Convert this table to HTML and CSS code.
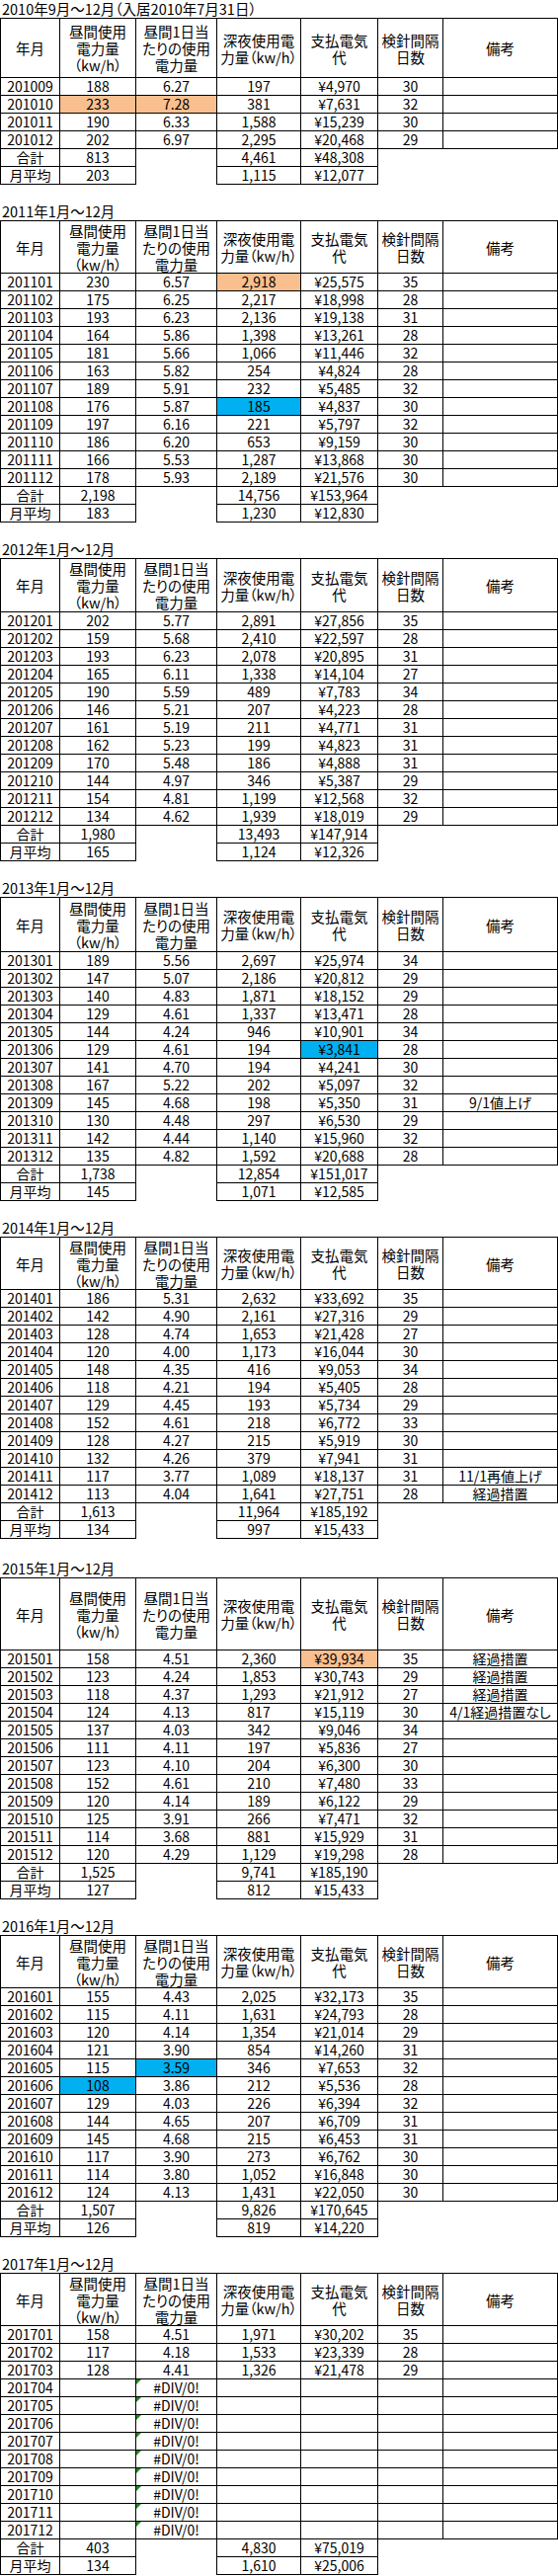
FILE: index.html
```html
<!DOCTYPE html>
<html lang="ja">
<head>
<meta charset="utf-8">
<title>電気使用量</title>
<link rel="stylesheet" href="styles.css">
</head>
<body>
<main class="book">

<section class="sheet">
<div class="title">2010年9月～12月（入居2010年7月31日）</div>
<table class="grid">
<colgroup><col class="c1"><col class="c2"><col class="c3"><col class="c4"><col class="c5"><col class="c6"><col class="c7"></colgroup>
<thead><tr class="hdr h61"><th>年月</th><th>昼間使用<br>電力量<br>（kw/h）</th><th>昼間1日当<br>たりの使用<br>電力量</th><th>深夜使用電<br>力量（kw/h）</th><th>支払電気<br>代</th><th>検針間隔<br>日数</th><th>備考</th></tr></thead>
<tbody>
<tr><td>201009</td><td>188</td><td>6.27</td><td>197</td><td>¥4,970</td><td>30</td><td></td></tr>
<tr><td>201010</td><td class="or">233</td><td class="or">7.28</td><td>381</td><td>¥7,631</td><td>32</td><td></td></tr>
<tr><td>201011</td><td>190</td><td>6.33</td><td>1,588</td><td>¥15,239</td><td>30</td><td></td></tr>
<tr><td>201012</td><td>202</td><td>6.97</td><td>2,295</td><td>¥20,468</td><td>29</td><td></td></tr>
</tbody>
<tbody class="tot">
<tr><td class="b">合計</td><td class="b">813</td><td></td><td class="b">4,461</td><td class="b">¥48,308</td><td></td><td></td></tr>
<tr><td class="b">月平均</td><td class="b">203</td><td></td><td class="b">1,115</td><td class="b">¥12,077</td><td></td><td></td></tr>
</tbody>
</table>
</section>

<section class="sheet">
<div class="title">2011年1月～12月</div>
<table class="grid">
<colgroup><col class="c1"><col class="c2"><col class="c3"><col class="c4"><col class="c5"><col class="c6"><col class="c7"></colgroup>
<thead><tr class="hdr"><th>年月</th><th>昼間使用<br>電力量<br>（kw/h）</th><th>昼間1日当<br>たりの使用<br>電力量</th><th>深夜使用電<br>力量（kw/h）</th><th>支払電気<br>代</th><th>検針間隔<br>日数</th><th>備考</th></tr></thead>
<tbody>
<tr><td>201101</td><td>230</td><td>6.57</td><td class="or">2,918</td><td>¥25,575</td><td>35</td><td></td></tr>
<tr><td>201102</td><td>175</td><td>6.25</td><td>2,217</td><td>¥18,998</td><td>28</td><td></td></tr>
<tr><td>201103</td><td>193</td><td>6.23</td><td>2,136</td><td>¥19,138</td><td>31</td><td></td></tr>
<tr><td>201104</td><td>164</td><td>5.86</td><td>1,398</td><td>¥13,261</td><td>28</td><td></td></tr>
<tr><td>201105</td><td>181</td><td>5.66</td><td>1,066</td><td>¥11,446</td><td>32</td><td></td></tr>
<tr><td>201106</td><td>163</td><td>5.82</td><td>254</td><td>¥4,824</td><td>28</td><td></td></tr>
<tr><td>201107</td><td>189</td><td>5.91</td><td>232</td><td>¥5,485</td><td>32</td><td></td></tr>
<tr><td>201108</td><td>176</td><td>5.87</td><td class="bl">185</td><td>¥4,837</td><td>30</td><td></td></tr>
<tr><td>201109</td><td>197</td><td>6.16</td><td>221</td><td>¥5,797</td><td>32</td><td></td></tr>
<tr><td>201110</td><td>186</td><td>6.20</td><td>653</td><td>¥9,159</td><td>30</td><td></td></tr>
<tr><td>201111</td><td>166</td><td>5.53</td><td>1,287</td><td>¥13,868</td><td>30</td><td></td></tr>
<tr><td>201112</td><td>178</td><td>5.93</td><td>2,189</td><td>¥21,576</td><td>30</td><td></td></tr>
</tbody>
<tbody class="tot">
<tr><td class="b">合計</td><td class="b">2,198</td><td></td><td class="b">14,756</td><td class="b">¥153,964</td><td></td><td></td></tr>
<tr><td class="b">月平均</td><td class="b">183</td><td></td><td class="b">1,230</td><td class="b">¥12,830</td><td></td><td></td></tr>
</tbody>
</table>
</section>

<section class="sheet">
<div class="title">2012年1月～12月</div>
<table class="grid">
<colgroup><col class="c1"><col class="c2"><col class="c3"><col class="c4"><col class="c5"><col class="c6"><col class="c7"></colgroup>
<thead><tr class="hdr h55"><th>年月</th><th>昼間使用<br>電力量<br>（kw/h）</th><th>昼間1日当<br>たりの使用<br>電力量</th><th>深夜使用電<br>力量（kw/h）</th><th>支払電気<br>代</th><th>検針間隔<br>日数</th><th>備考</th></tr></thead>
<tbody>
<tr><td>201201</td><td>202</td><td>5.77</td><td>2,891</td><td>¥27,856</td><td>35</td><td></td></tr>
<tr><td>201202</td><td>159</td><td>5.68</td><td>2,410</td><td>¥22,597</td><td>28</td><td></td></tr>
<tr><td>201203</td><td>193</td><td>6.23</td><td>2,078</td><td>¥20,895</td><td>31</td><td></td></tr>
<tr><td>201204</td><td>165</td><td>6.11</td><td>1,338</td><td>¥14,104</td><td>27</td><td></td></tr>
<tr><td>201205</td><td>190</td><td>5.59</td><td>489</td><td>¥7,783</td><td>34</td><td></td></tr>
<tr><td>201206</td><td>146</td><td>5.21</td><td>207</td><td>¥4,223</td><td>28</td><td></td></tr>
<tr><td>201207</td><td>161</td><td>5.19</td><td>211</td><td>¥4,771</td><td>31</td><td></td></tr>
<tr><td>201208</td><td>162</td><td>5.23</td><td>199</td><td>¥4,823</td><td>31</td><td></td></tr>
<tr><td>201209</td><td>170</td><td>5.48</td><td>186</td><td>¥4,888</td><td>31</td><td></td></tr>
<tr><td>201210</td><td>144</td><td>4.97</td><td>346</td><td>¥5,387</td><td>29</td><td></td></tr>
<tr><td>201211</td><td>154</td><td>4.81</td><td>1,199</td><td>¥12,568</td><td>32</td><td></td></tr>
<tr><td>201212</td><td>134</td><td>4.62</td><td>1,939</td><td>¥18,019</td><td>29</td><td></td></tr>
</tbody>
<tbody class="tot">
<tr><td class="b">合計</td><td class="b">1,980</td><td></td><td class="b">13,493</td><td class="b">¥147,914</td><td></td><td></td></tr>
<tr><td class="b">月平均</td><td class="b">165</td><td></td><td class="b">1,124</td><td class="b">¥12,326</td><td></td><td></td></tr>
</tbody>
</table>
</section>

<section class="sheet">
<div class="title">2013年1月～12月</div>
<table class="grid">
<colgroup><col class="c1"><col class="c2"><col class="c3"><col class="c4"><col class="c5"><col class="c6"><col class="c7"></colgroup>
<thead><tr class="hdr h56"><th>年月</th><th>昼間使用<br>電力量<br>（kw/h）</th><th>昼間1日当<br>たりの使用<br>電力量</th><th>深夜使用電<br>力量（kw/h）</th><th>支払電気<br>代</th><th>検針間隔<br>日数</th><th>備考</th></tr></thead>
<tbody>
<tr><td>201301</td><td>189</td><td>5.56</td><td>2,697</td><td>¥25,974</td><td>34</td><td></td></tr>
<tr><td>201302</td><td>147</td><td>5.07</td><td>2,186</td><td>¥20,812</td><td>29</td><td></td></tr>
<tr><td>201303</td><td>140</td><td>4.83</td><td>1,871</td><td>¥18,152</td><td>29</td><td></td></tr>
<tr><td>201304</td><td>129</td><td>4.61</td><td>1,337</td><td>¥13,471</td><td>28</td><td></td></tr>
<tr><td>201305</td><td>144</td><td>4.24</td><td>946</td><td>¥10,901</td><td>34</td><td></td></tr>
<tr><td>201306</td><td>129</td><td>4.61</td><td>194</td><td class="bl">¥3,841</td><td>28</td><td></td></tr>
<tr><td>201307</td><td>141</td><td>4.70</td><td>194</td><td>¥4,241</td><td>30</td><td></td></tr>
<tr><td>201308</td><td>167</td><td>5.22</td><td>202</td><td>¥5,097</td><td>32</td><td></td></tr>
<tr><td>201309</td><td>145</td><td>4.68</td><td>198</td><td>¥5,350</td><td>31</td><td>9/1値上げ</td></tr>
<tr><td>201310</td><td>130</td><td>4.48</td><td>297</td><td>¥6,530</td><td>29</td><td></td></tr>
<tr><td>201311</td><td>142</td><td>4.44</td><td>1,140</td><td>¥15,960</td><td>32</td><td></td></tr>
<tr><td>201312</td><td>135</td><td>4.82</td><td>1,592</td><td>¥20,688</td><td>28</td><td></td></tr>
</tbody>
<tbody class="tot">
<tr><td class="b">合計</td><td class="b">1,738</td><td></td><td class="b">12,854</td><td class="b">¥151,017</td><td></td><td></td></tr>
<tr><td class="b">月平均</td><td class="b">145</td><td></td><td class="b">1,071</td><td class="b">¥12,585</td><td></td><td></td></tr>
</tbody>
</table>
</section>

<section class="sheet">
<div class="title">2014年1月～12月</div>
<table class="grid">
<colgroup><col class="c1"><col class="c2"><col class="c3"><col class="c4"><col class="c5"><col class="c6"><col class="c7"></colgroup>
<thead><tr class="hdr"><th>年月</th><th>昼間使用<br>電力量<br>（kw/h）</th><th>昼間1日当<br>たりの使用<br>電力量</th><th>深夜使用電<br>力量（kw/h）</th><th>支払電気<br>代</th><th>検針間隔<br>日数</th><th>備考</th></tr></thead>
<tbody>
<tr><td>201401</td><td>186</td><td>5.31</td><td>2,632</td><td>¥33,692</td><td>35</td><td></td></tr>
<tr><td>201402</td><td>142</td><td>4.90</td><td>2,161</td><td>¥27,316</td><td>29</td><td></td></tr>
<tr><td>201403</td><td>128</td><td>4.74</td><td>1,653</td><td>¥21,428</td><td>27</td><td></td></tr>
<tr><td>201404</td><td>120</td><td>4.00</td><td>1,173</td><td>¥16,044</td><td>30</td><td></td></tr>
<tr><td>201405</td><td>148</td><td>4.35</td><td>416</td><td>¥9,053</td><td>34</td><td></td></tr>
<tr><td>201406</td><td>118</td><td>4.21</td><td>194</td><td>¥5,405</td><td>28</td><td></td></tr>
<tr><td>201407</td><td>129</td><td>4.45</td><td>193</td><td>¥5,734</td><td>29</td><td></td></tr>
<tr><td>201408</td><td>152</td><td>4.61</td><td>218</td><td>¥6,772</td><td>33</td><td></td></tr>
<tr><td>201409</td><td>128</td><td>4.27</td><td>215</td><td>¥5,919</td><td>30</td><td></td></tr>
<tr><td>201410</td><td>132</td><td>4.26</td><td>379</td><td>¥7,941</td><td>31</td><td></td></tr>
<tr><td>201411</td><td>117</td><td>3.77</td><td>1,089</td><td>¥18,137</td><td>31</td><td>11/1再値上げ</td></tr>
<tr><td>201412</td><td>113</td><td>4.04</td><td>1,641</td><td>¥27,751</td><td>28</td><td>経過措置</td></tr>
</tbody>
<tbody class="tot">
<tr><td class="b">合計</td><td class="b">1,613</td><td></td><td class="b">11,964</td><td class="b">¥185,192</td><td></td><td></td></tr>
<tr><td class="b">月平均</td><td class="b">134</td><td></td><td class="b">997</td><td class="b">¥15,433</td><td></td><td></td></tr>
</tbody>
</table>
</section>

<section class="sheet">
<div class="title tall">2015年1月～12月</div>
<table class="grid">
<colgroup><col class="c1"><col class="c2"><col class="c3"><col class="c4"><col class="c5"><col class="c6"><col class="c7"></colgroup>
<thead><tr class="hdr h74"><th>年月</th><th>昼間使用<br>電力量<br>（kw/h）</th><th>昼間1日当<br>たりの使用<br>電力量</th><th>深夜使用電<br>力量（kw/h）</th><th>支払電気<br>代</th><th>検針間隔<br>日数</th><th>備考</th></tr></thead>
<tbody>
<tr><td>201501</td><td>158</td><td>4.51</td><td>2,360</td><td class="or">¥39,934</td><td>35</td><td>経過措置</td></tr>
<tr><td>201502</td><td>123</td><td>4.24</td><td>1,853</td><td>¥30,743</td><td>29</td><td>経過措置</td></tr>
<tr><td>201503</td><td>118</td><td>4.37</td><td>1,293</td><td>¥21,912</td><td>27</td><td>経過措置</td></tr>
<tr><td>201504</td><td>124</td><td>4.13</td><td>817</td><td>¥15,119</td><td>30</td><td>4/1経過措置なし</td></tr>
<tr><td>201505</td><td>137</td><td>4.03</td><td>342</td><td>¥9,046</td><td>34</td><td></td></tr>
<tr><td>201506</td><td>111</td><td>4.11</td><td>197</td><td>¥5,836</td><td>27</td><td></td></tr>
<tr><td>201507</td><td>123</td><td>4.10</td><td>204</td><td>¥6,300</td><td>30</td><td></td></tr>
<tr><td>201508</td><td>152</td><td>4.61</td><td>210</td><td>¥7,480</td><td>33</td><td></td></tr>
<tr><td>201509</td><td>120</td><td>4.14</td><td>189</td><td>¥6,122</td><td>29</td><td></td></tr>
<tr><td>201510</td><td>125</td><td>3.91</td><td>266</td><td>¥7,471</td><td>32</td><td></td></tr>
<tr><td>201511</td><td>114</td><td>3.68</td><td>881</td><td>¥15,929</td><td>31</td><td></td></tr>
<tr><td>201512</td><td>120</td><td>4.29</td><td>1,129</td><td>¥19,298</td><td>28</td><td></td></tr>
</tbody>
<tbody class="tot">
<tr><td class="b">合計</td><td class="b">1,525</td><td></td><td class="b">9,741</td><td class="b">¥185,190</td><td></td><td></td></tr>
<tr><td class="b">月平均</td><td class="b">127</td><td></td><td class="b">812</td><td class="b">¥15,433</td><td></td><td></td></tr>
</tbody>
</table>
</section>

<section class="sheet">
<div class="title">2016年1月～12月</div>
<table class="grid">
<colgroup><col class="c1"><col class="c2"><col class="c3"><col class="c4"><col class="c5"><col class="c6"><col class="c7"></colgroup>
<thead><tr class="hdr"><th>年月</th><th>昼間使用<br>電力量<br>（kw/h）</th><th>昼間1日当<br>たりの使用<br>電力量</th><th>深夜使用電<br>力量（kw/h）</th><th>支払電気<br>代</th><th>検針間隔<br>日数</th><th>備考</th></tr></thead>
<tbody>
<tr><td>201601</td><td>155</td><td>4.43</td><td>2,025</td><td>¥32,173</td><td>35</td><td></td></tr>
<tr><td>201602</td><td>115</td><td>4.11</td><td>1,631</td><td>¥24,793</td><td>28</td><td></td></tr>
<tr><td>201603</td><td>120</td><td>4.14</td><td>1,354</td><td>¥21,014</td><td>29</td><td></td></tr>
<tr><td>201604</td><td>121</td><td>3.90</td><td>854</td><td>¥14,260</td><td>31</td><td></td></tr>
<tr><td>201605</td><td>115</td><td class="bl">3.59</td><td>346</td><td>¥7,653</td><td>32</td><td></td></tr>
<tr><td>201606</td><td class="bl">108</td><td>3.86</td><td>212</td><td>¥5,536</td><td>28</td><td></td></tr>
<tr><td>201607</td><td>129</td><td>4.03</td><td>226</td><td>¥6,394</td><td>32</td><td></td></tr>
<tr><td>201608</td><td>144</td><td>4.65</td><td>207</td><td>¥6,709</td><td>31</td><td></td></tr>
<tr><td>201609</td><td>145</td><td>4.68</td><td>215</td><td>¥6,453</td><td>31</td><td></td></tr>
<tr><td>201610</td><td>117</td><td>3.90</td><td>273</td><td>¥6,762</td><td>30</td><td></td></tr>
<tr><td>201611</td><td>114</td><td>3.80</td><td>1,052</td><td>¥16,848</td><td>30</td><td></td></tr>
<tr><td>201612</td><td>124</td><td>4.13</td><td>1,431</td><td>¥22,050</td><td>30</td><td></td></tr>
</tbody>
<tbody class="tot">
<tr><td class="b">合計</td><td class="b">1,507</td><td></td><td class="b">9,826</td><td class="b">¥170,645</td><td></td><td></td></tr>
<tr><td class="b">月平均</td><td class="b">126</td><td></td><td class="b">819</td><td class="b">¥14,220</td><td></td><td></td></tr>
</tbody>
</table>
</section>

<section class="sheet">
<div class="title">2017年1月～12月</div>
<table class="grid">
<colgroup><col class="c1"><col class="c2"><col class="c3"><col class="c4"><col class="c5"><col class="c6"><col class="c7"></colgroup>
<thead><tr class="hdr"><th>年月</th><th>昼間使用<br>電力量<br>（kw/h）</th><th>昼間1日当<br>たりの使用<br>電力量</th><th>深夜使用電<br>力量（kw/h）</th><th>支払電気<br>代</th><th>検針間隔<br>日数</th><th>備考</th></tr></thead>
<tbody>
<tr><td>201701</td><td>158</td><td>4.51</td><td>1,971</td><td>¥30,202</td><td>35</td><td></td></tr>
<tr><td>201702</td><td>117</td><td>4.18</td><td>1,533</td><td>¥23,339</td><td>28</td><td></td></tr>
<tr><td>201703</td><td>128</td><td>4.41</td><td>1,326</td><td>¥21,478</td><td>29</td><td></td></tr>
<tr><td>201704</td><td></td><td class="err">#DIV/0!</td><td></td><td></td><td></td><td></td></tr>
<tr><td>201705</td><td></td><td class="err">#DIV/0!</td><td></td><td></td><td></td><td></td></tr>
<tr><td>201706</td><td></td><td class="err">#DIV/0!</td><td></td><td></td><td></td><td></td></tr>
<tr><td>201707</td><td></td><td class="err">#DIV/0!</td><td></td><td></td><td></td><td></td></tr>
<tr><td>201708</td><td></td><td class="err">#DIV/0!</td><td></td><td></td><td></td><td></td></tr>
<tr><td>201709</td><td></td><td class="err">#DIV/0!</td><td></td><td></td><td></td><td></td></tr>
<tr><td>201710</td><td></td><td class="err">#DIV/0!</td><td></td><td></td><td></td><td></td></tr>
<tr><td>201711</td><td></td><td class="err">#DIV/0!</td><td></td><td></td><td></td><td></td></tr>
<tr><td>201712</td><td></td><td class="err">#DIV/0!</td><td></td><td></td><td></td><td></td></tr>
</tbody>
<tbody class="tot">
<tr><td class="b">合計</td><td class="b">403</td><td></td><td class="b">4,830</td><td class="b">¥75,019</td><td></td><td></td></tr>
<tr><td class="b">月平均</td><td class="b">134</td><td></td><td class="b">1,610</td><td class="b">¥25,006</td><td></td><td></td></tr>
</tbody>
</table>
</section>

</main>
</body>
</html>
```

FILE: styles.css
```css
* { box-sizing: border-box; }
html, body { margin: 0; padding: 0; background: #fff; }
body {
  font-family: "Noto Sans CJK JP", "Noto Sans", sans-serif;
  font-size: 14px;
  color: #000;
  font-feature-settings: "palt";
}
.book {
  display: flex;
  flex-direction: column;
  gap: 18px;
  width: 565px;
}
.sheet { display: flex; flex-direction: column; }
.title {
  height: 18px;
  line-height: 17px;
  padding-left: 2px;
  white-space: nowrap;
  font-size: 14.5px;
}
.title.tall { height: 21px; padding-top: 3px; }
.grid {
  border-collapse: separate;
  border-spacing: 0;
  table-layout: fixed;
  width: 565px;
}
.c1 { width: 61px; }
.c2 { width: 77px; }
.c3 { width: 82px; }
.c4 { width: 85px; }
.c5 { width: 78px; }
.c6 { width: 66px; }
.c7 { width: 116px; }
.grid th, .grid td {
  padding: 0;
  text-align: center;
  white-space: nowrap;
  border-right: 1px solid #000;
  border-bottom: 1px solid #000;
}
.grid th:first-child, .grid td:first-child { border-left: 1px solid #000; }
.grid th {
  font-weight: normal;
  border-top: 1px solid #000;
  line-height: 17px;
  vertical-align: middle;
  font-size: 14.5px;
}
.grid tr { height: 18px; }
.grid tr.hdr { height: 54px; }
.grid tr.h55 { height: 55px; }
.grid tr.h56 { height: 56px; }
.grid tr.h61 { height: 61px; }
.grid tr.h74 { height: 74px; }
.grid td {
  line-height: 17px;
  vertical-align: bottom;
}
.grid tbody.tot td { border: none; }
.grid tbody.tot td.b { border-right: 1px solid #000; border-bottom: 1px solid #000; }
.grid tbody.tot td.b:first-child { border-left: 1px solid #000; }
.grid tbody.tot td:nth-child(3) { border-right: 1px solid #000; }
.or { background: #fabf8f; }
.bl { background: #00b0f0; }
.err { position: relative; }
.err::before {
  content: "";
  position: absolute;
  left: 0;
  top: 0;
  border-top: 5px solid #1f8a1f;
  border-right: 5px solid transparent;
}
```
